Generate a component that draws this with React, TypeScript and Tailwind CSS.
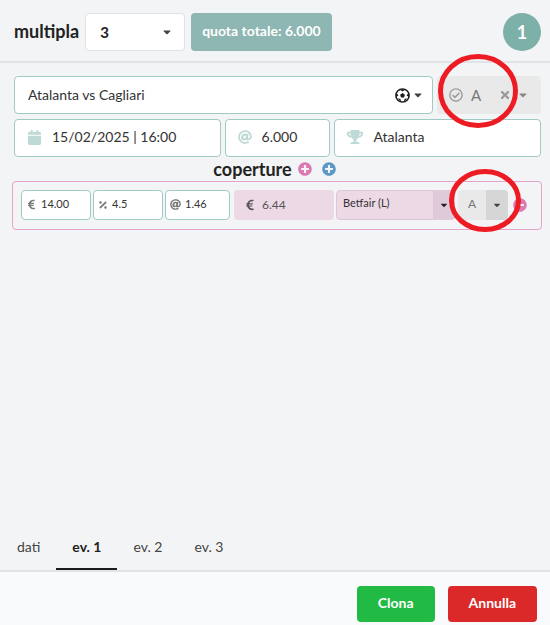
import type { ReactNode } from "react";
import {
  FaAt,
  FaCalendar,
  FaCaretDown,
  FaEuroSign,
  FaMinusCircle,
  FaPercentage,
  FaPlusCircle,
  FaRegCheckCircle,
  FaTimes,
  FaTrophy,
} from "react-icons/fa";

const tabs = ["dati", "ev. 1", "ev. 2", "ev. 3"];

type FieldProps = {
  label: string;
  value: string;
  icon: ReactNode;
};

const Field = ({ label, value, icon }: FieldProps) => (
  <label className="flex items-center gap-2.5 h-[38px] min-w-0 px-3 pb-0.5 rounded border border-[#a0cac4] bg-white text-[#bfd9d6]">
    {icon}
    <input
      aria-label={label}
      defaultValue={value}
      className="w-full min-w-0 bg-transparent text-sm text-[#333] outline-none"
    />
  </label>
);

const SmallField = ({ label, value, icon }: FieldProps) => (
  <label className="flex items-center gap-1 h-[30px] min-w-0 px-1 rounded border border-[#a0cac4] bg-white text-[#777]">
    {icon}
    <input
      aria-label={label}
      defaultValue={value}
      className="w-full min-w-0 bg-transparent text-[11px] text-[#333] outline-none"
    />
  </label>
);

const Ball = () => (
  <svg width="15" height="15" viewBox="0 0 30 30">
    <circle cx="15" cy="15" r="13.2" fill="#fff" stroke="#1b1c1d" strokeWidth="3" />
    <path
      fill="#1b1c1d"
      d="M15 10l4.800 3.600-1.800 5.600h-6l-1.800-5.600zM9.5 3h11L15 7zM27.5 10l1 9-5.500-4.500zM25 21l-7.500 7 1.800-6.500zM5 21l7.500 7-1.800-6.500zM2.500 10l-1 9 5.500-4.500z"
    />
  </svg>
);

const App = () => {
  return (
    <main className="flex flex-col min-h-screen overflow-hidden bg-[#f3f4f6] font-['Lato',sans-serif] text-[#222]">
      <header className="flex items-center pt-[13px] pb-[10px] pl-3.5 pr-[9px] border-b-2 border-[#e2e3e5]">
        <label htmlFor="multipla" className="pb-0.5 text-lg font-bold">
          multipla
        </label>
        <div className="relative ml-1.5 w-[100px]">
          <select
            id="multipla"
            className="appearance-none w-full h-[38px] pl-3.5 rounded border border-[#e2e3e5] bg-white text-[15px] font-bold outline-none"
          >
            <option>3</option>
          </select>
          <FaCaretDown
            size={12}
            className="absolute right-3 top-1/2 -translate-y-1/2 text-[#444] pointer-events-none"
          />
        </div>
        <div className="flex items-center h-[38px] ml-1.5 px-[11px] pb-0.5 rounded bg-[#8eb6b2] text-sm font-bold text-white">
          quota totale: 6.000
        </div>
        <div className="flex items-center justify-center size-[38px] ml-auto rounded-full bg-[#7eb0aa] text-lg font-bold text-white">
          1
        </div>
      </header>

      <section className="flex-1 pt-[13px] pl-3.5 pr-[9px]">
        <div className="flex gap-1">
          <div className="flex flex-1 items-center h-[38px] min-w-0 pl-[13px] pr-2 rounded border border-[#a0cac4] bg-white">
            <input
              aria-label="evento"
              defaultValue="Atalanta vs Cagliari"
              className="flex-1 min-w-0 bg-transparent text-sm text-[#333] outline-none"
            />
            <button aria-label="sport" className="flex items-center gap-0.5 text-[#444]">
              <Ball />
              <FaCaretDown size={12} />
            </button>
          </div>
          <div className="relative flex items-center h-[38px] w-[104px] pl-3 pr-3 rounded bg-[#e9e9e9] text-[#999]">
            <FaRegCheckCircle size={14} />
            <span className="ml-2 text-[15px] text-[#777]">A</span>
            <button aria-label="rimuovi" className="ml-auto">
              <FaTimes size={12} />
            </button>
            <button aria-label="esito" className="ml-1.5 text-[#888]">
              <FaCaretDown size={12} />
            </button>
            <svg
              className="absolute left-0 top-1/2 -translate-y-1/2 pointer-events-none"
              width="82"
              height="84"
              viewBox="0 0 82 84"
            >
              <ellipse cx="41" cy="38" rx="37.5" ry="34.5" fill="none" stroke="#ed1c24" strokeWidth="5" />
            </svg>
          </div>
        </div>

        <div className="grid grid-cols-[39fr_20fr_39fr] gap-1 mt-[5px]">
          <Field label="data" value="15/02/2025 | 16:00" icon={<FaCalendar size={15} className="shrink-0" />} />
          <Field label="quota" value="6.000" icon={<FaAt size={14} className="shrink-0" />} />
          <Field label="squadra" value="Atalanta" icon={<FaTrophy size={16} className="shrink-0" />} />
        </div>

        <div className="flex items-center justify-center h-6 pr-1.5">
          <h2 className="text-lg font-bold">coperture</h2>
          <button aria-label="aggiungi copertura rosa" className="ml-1.5 text-[#dc79b3]">
            <FaPlusCircle size={14} />
          </button>
          <button aria-label="aggiungi copertura blu" className="ml-2.5 text-[#5b98c6]">
            <FaPlusCircle size={14} />
          </button>
        </div>

        <div className="grid grid-cols-[70fr_70fr_65fr_102fr_119fr_51px_17px] items-center gap-0.5 -ml-0.5 -mr-px h-[49px] pl-2 pr-3.5 pb-0.5 rounded border border-[#e6a3cb]">
          <SmallField label="importo" value="14.00" icon={<FaEuroSign size={11} className="shrink-0" />} />
          <SmallField label="commissione" value="4.5" icon={<FaPercentage size={10} className="shrink-0" />} />
          <SmallField label="quota copertura" value="1.46" icon={<FaAt size={11} className="shrink-0" />} />
          <div className="flex items-center gap-1.5 h-[30px] min-w-0 ml-0.5 pl-2.5 rounded bg-[#edd8e5] text-xs text-[#555]">
            <FaEuroSign size={12} />
            6.44
          </div>
          <div className="relative min-w-0">
            <select
              aria-label="bookmaker"
              className="block appearance-none w-full h-[30px] pl-1.5 pb-0.5 rounded border border-[#dcc8d6] bg-[#edd8e5] text-[11px] text-[#333] outline-none"
            >
              <option>Betfair (L)</option>
            </select>
            <span className="absolute right-0 top-0 flex items-center justify-center w-[22px] h-[30px] rounded-r bg-[#dfcad9] pointer-events-none">
              <FaCaretDown size={10} />
            </span>
          </div>
          <div className="relative ml-px">
            <select
              aria-label="esito copertura"
              className="block appearance-none w-full h-[30px] pl-2.5 pb-0.5 rounded bg-[#e9e9e9] text-xs text-[#777] outline-none"
            >
              <option>A</option>
            </select>
            <span className="absolute right-0 top-0 flex items-center justify-center w-[22px] h-[30px] rounded-r bg-[#d6d6d6] text-[#444] pointer-events-none">
              <FaCaretDown size={10} />
            </span>
            <svg
              className="absolute -left-2.5 top-1/2 z-10 -translate-y-1/2 max-w-none pointer-events-none"
              width="74"
              height="74"
              viewBox="0 0 74 74"
            >
              <ellipse cx="37" cy="32.5" rx="33.5" ry="29" fill="none" stroke="#ed1c24" strokeWidth="5" />
            </svg>
          </div>
          <button aria-label="rimuovi copertura" className="justify-self-end text-[#dc79b3]">
            <FaMinusCircle size={14} />
          </button>
        </div>
      </section>

      <nav className="flex pl-px border-b-2 border-[#e2e3e5]">
        {tabs.map((tab) => (
          <button
            key={tab}
            className={
              tab === "ev. 1"
                ? "h-[46px] px-4 pt-0.5 border-b-2 border-[#1b1c1d] text-sm font-bold"
                : "h-[46px] px-4 pt-0.5 border-b-2 border-transparent text-sm text-[#444]"
            }
          >
            {tab}
          </button>
        ))}
      </nav>

      <footer className="flex justify-end gap-[13px] pt-3.5 pb-[3px] pr-[13px] bg-[#f9fafb]">
        <button className="h-9 px-[21px] pb-0.5 rounded bg-[#21ba45] text-sm font-bold text-white">Clona</button>
        <button className="h-9 px-[21px] pb-0.5 rounded bg-[#db2828] text-sm font-bold text-white">Annulla</button>
      </footer>
    </main>
  );
};
export default App;
